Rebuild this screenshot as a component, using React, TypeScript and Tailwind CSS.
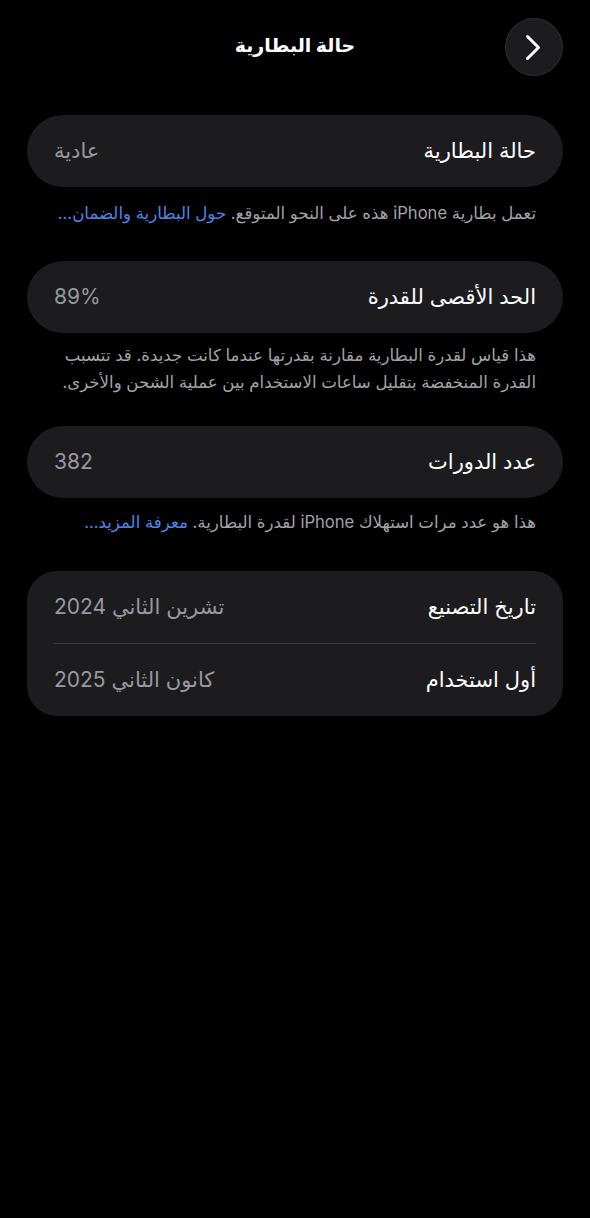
const font = { fontFamily: 'Inter, "Noto Sans", "DejaVu Sans", sans-serif' }

function Row({ label, value }: { label: string; value: string }) {
  return (
    <div className="flex h-[72px] items-center justify-between">
      <span className="text-[21px] text-white">{label}</span>
      <span className="text-[21px] text-[#98989e]">{value}</span>
    </div>
  )
}

function Note({ className, children }: { className: string; children: React.ReactNode }) {
  return <p className={`px-[54px] text-[16.6px] leading-[27px] text-[#a3a3a8] ${className}`}>{children}</p>
}

export default function App() {
  return (
    <div dir="rtl" className="min-h-[1218px] w-[590px] bg-black" style={font}>
      <div className="relative flex h-[94px] items-center justify-center pb-[2px]">
        <h1 className="text-[19px] font-bold text-white">حالة البطارية</h1>
        <button className="absolute right-[27px] top-[18px] flex h-[58px] w-[58px] items-center justify-center rounded-full border border-[#2e2e30] bg-[#1c1c1e]">
          <svg width="16" height="27" viewBox="0 0 16 27" className="ml-[-2px]">
            <polyline points="2.5,2.5 13.5,13.5 2.5,24.5" fill="none" stroke="white" strokeWidth="3" strokeLinecap="round" strokeLinejoin="round" />
          </svg>
        </button>
      </div>

      <div className="mx-[27px] mt-[21px]">
        <div className="rounded-[36px] bg-[#1c1c1e] px-[27px]">
          <Row label="حالة البطارية" value="عادية" />
        </div>
      </div>
      <Note className="mt-[13px]">
        تعمل بطارية iPhone هذه على النحو المتوقع. <span className="text-[#4f86e8]">حول البطارية والضمان...</span>
      </Note>

      <div className="mx-[27px] mt-[34px]">
        <div className="rounded-[36px] bg-[#1c1c1e] px-[27px]">
          <Row label="الحد الأقصى للقدرة" value="89%" />
        </div>
      </div>
      <Note className="mt-[9px]">
        هذا قياس لقدرة البطارية مقارنة بقدرتها عندما كانت جديدة. قد تتسبب القدرة المنخفضة بتقليل ساعات الاستخدام بين عملية الشحن والأخرى.
      </Note>

      <div className="mx-[27px] mt-[30px]">
        <div className="rounded-[36px] bg-[#1c1c1e] px-[27px]">
          <Row label="عدد الدورات" value="382" />
        </div>
      </div>
      <Note className="mt-[11px]">
        هذا هو عدد مرات استهلاك iPhone لقدرة البطارية. <span className="text-[#4f86e8]">معرفة المزيد...</span>
      </Note>

      <div className="mx-[27px] mt-[35px]">
        <div className="rounded-[30px] bg-[#1c1c1e] px-[27px]">
          <Row label="تاريخ التصنيع" value="تشرين الثاني 2024" />
          <div className="h-px bg-[#3a3a3c]" />
          <Row label="أول استخدام" value="كانون الثاني 2025" />
        </div>
      </div>
    </div>
  )
}
